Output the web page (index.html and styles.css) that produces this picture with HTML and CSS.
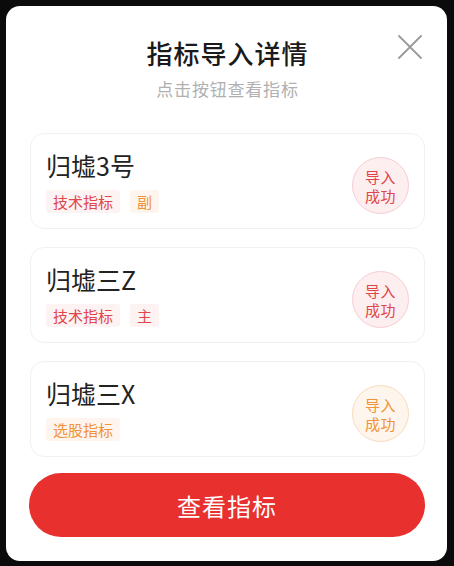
FILE: index.html
```html
<!DOCTYPE html>
<html lang="zh">
<head>
<meta charset="utf-8">
<title>指标导入详情</title>
<link rel="stylesheet" href="styles.css">
</head>
<body>
<div class="modal">
  <button class="close" aria-label="关闭">
    <svg width="24" height="24" viewBox="0 0 24 24"><path d="M1 1 L23 23 M23 1 L1 23" stroke="#9a9a9a" stroke-width="1.8" fill="none" stroke-linecap="round"/></svg>
  </button>
  <div class="header">
    <h1 class="title">指标导入详情</h1>
    <p class="subtitle">点击按钮查看指标</p>
  </div>
  <div class="list">
    <div class="card">
      <div class="info">
        <div class="name">归墟3号</div>
        <div class="tags">
          <span class="tag red">技术指标</span>
          <span class="tag orange">副</span>
        </div>
      </div>
      <div class="badge red"><span>导入</span><span>成功</span></div>
    </div>
    <div class="card">
      <div class="info">
        <div class="name">归墟三Z</div>
        <div class="tags">
          <span class="tag red">技术指标</span>
          <span class="tag red">主</span>
        </div>
      </div>
      <div class="badge red"><span>导入</span><span>成功</span></div>
    </div>
    <div class="card">
      <div class="info">
        <div class="name">归墟三X</div>
        <div class="tags">
          <span class="tag orange">选股指标</span>
        </div>
      </div>
      <div class="badge orange"><span>导入</span><span>成功</span></div>
    </div>
  </div>
  <button class="action">查看指标</button>
</div>
</body>
</html>
```

FILE: styles.css
```css
* { box-sizing: border-box; }
html, body {
  margin: 0;
  padding: 0;
}
body {
  width: 454px;
  height: 566px;
  background: #0b0b0b;
  font-family: "Noto Sans CJK SC", "Noto Sans", sans-serif;
  overflow: hidden;
  padding: 6px 0 0 6px;
}
.modal {
  position: relative;
  width: 441px;
  height: 555px;
  background: #fff;
  border-radius: 14px;
  padding: 29px 22px 0 24px;
  display: flex;
  flex-direction: column;
}
.close {
  position: absolute;
  left: 392px;
  top: 29px;
  width: 24px;
  height: 24px;
  padding: 0;
  border: none;
  background: none;
  display: flex;
}
.header {
  display: flex;
  flex-direction: column;
  align-items: center;
}
.title {
  margin: 0;
  font-size: 26px;
  line-height: 36px;
  font-weight: 500;
  color: #1a1a1a;
  letter-spacing: 1px;
}
.subtitle {
  margin: 6px 0 0;
  font-size: 17px;
  line-height: 24px;
  color: #b0b0b0;
  letter-spacing: 0.8px;
}
.list {
  margin-top: 32px;
  display: flex;
  flex-direction: column;
  gap: 18px;
}
.card {
  height: 96px;
  border: 1px solid #f1f1f1;
  border-radius: 14px;
  padding: 16px 15px 0 15px;
  display: flex;
  justify-content: space-between;
}
.name {
  font-size: 25px;
  line-height: 30px;
  color: #222;
}
.tags {
  margin-top: 10px;
  display: flex;
  gap: 10px;
}
.tag {
  height: 23px;
  padding: 0 7px;
  font-size: 15px;
  line-height: 23px;
  border-radius: 3px;
}
.tag.red { background: #fdf3f3; color: #e0454a; }
.tag.orange { background: #fef6ee; color: #f0923a; }
.badge {
  width: 57px;
  height: 57px;
  margin-top: 7px;
  border-radius: 50%;
  font-size: 15px;
  line-height: 19px;
  display: flex;
  flex-direction: column;
  align-items: center;
  justify-content: center;
  text-align: center;
  letter-spacing: 0.5px;
}
.badge.red { background: #fdeff0; border: 1px solid #f6cdd2; color: #e0454a; }
.badge.orange { background: #fef6ed; border: 1px solid #f7dcbc; color: #f0923a; }
.action {
  margin-top: 16px;
  width: 396px;
  height: 64px;
  margin-left: -1px;
  border: none;
  border-radius: 32px;
  background: #e8302f;
  color: #fff;
  font-family: inherit;
  font-size: 24px;
  letter-spacing: 1px;
}
```
